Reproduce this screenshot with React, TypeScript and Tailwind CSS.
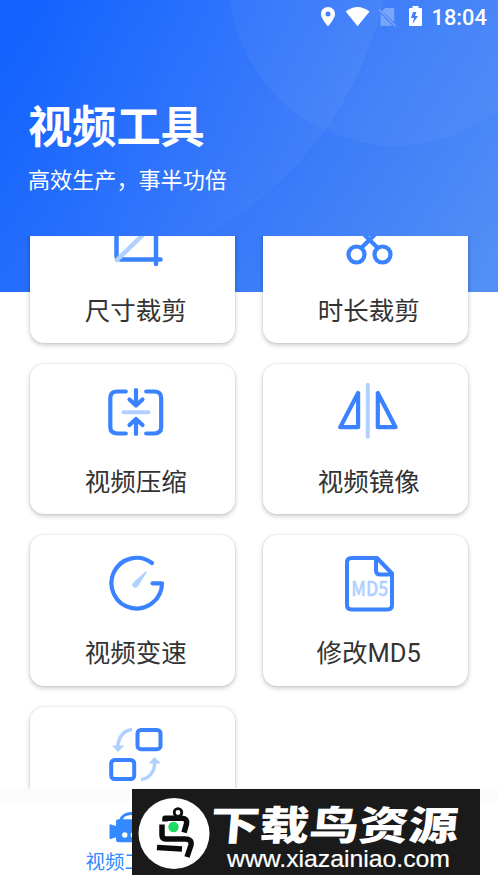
import type { ReactNode } from 'react'

const BLUE = '#3a82ff'
const PALE = '#b0d0ff'

function CropIcon() {
  return (
    <svg width="64" height="64" viewBox="0 0 64 64" fill="none" strokeWidth="4.500" strokeLinecap="round">
      <path d="M7 14h44q4 0 4 4v37M15.500 6v40.500q0 4 4 4h40" stroke={BLUE} />
      <path d="M16 51L51 17" stroke={PALE} />
    </svg>
  )
}

function ScissorsIcon() {
  return (
    <svg width="64" height="64" viewBox="0.500 0 64 64" fill="none" strokeWidth="4.200" stroke={BLUE}>
      <circle cx="23" cy="45.500" r="8" />
      <circle cx="49" cy="45.500" r="8" />
      <path d="M28 38.800L54 13M44 38.800L18 13" strokeLinecap="round" />
    </svg>
  )
}

function CompressIcon() {
  return (
    <svg width="64" height="64" viewBox="-2 0 64 64" fill="none" stroke={BLUE} strokeWidth="4.2" strokeLinecap="round" strokeLinejoin="round">
      <path d="M22.800 11.500H14.300q-7 0-7 6.500v29q0 6.500 7 6.500h8.500M43.200 11.500H51.200q7 0 7 6.500v29q0 6.500-7 6.500h-8" />
      <path d="M33 10v14.500M26.500 19.500l6.500 6l6.500-6M33 54V39.500M26.500 45l6.500-6l6.500 6" />
      <path d="M20.500 32.200H45.500" stroke={PALE} strokeWidth="4" />
    </svg>
  )
}

function MirrorIcon() {
  return (
    <svg width="64" height="64" viewBox="-.800 0 64 64" fill="none" stroke={BLUE} strokeWidth="4.200" strokeLinejoin="round" className="overflow-visible">
      <path d="M23.300 13v34.200H5.400zM43 13v34.200h17.800z" />
      <path d="M33 4.800v52" stroke={PALE} strokeWidth="4" strokeLinecap="round" />
    </svg>
  )
}

function SpeedIcon() {
  return (
    <svg width="64" height="64" viewBox="-1.500 0 64 64" fill="none" stroke={BLUE} strokeWidth="4.2" strokeLinecap="round" strokeLinejoin="round">
      <path d="M49.500 12A25.300 25.300 0 1 0 59.500 32.300H50" />
      <path d="M43.400 20.700L31.700 31C28.200 34.500 31.700 38.300 35 35.300C35.900 34.200 36.400 33.200 37 32.200L43.900 21.300z" fill={PALE} stroke={PALE} strokeWidth="0.800" />
    </svg>
  )
}

function Md5Icon() {
  return (
    <svg width="64" height="64" viewBox="-1 0 64 64" fill="none" stroke={BLUE} strokeWidth="4" strokeLinejoin="round">
      <path d="M42 7H16.500q-4.500 0-4.500 4.500v42.500q0 4.500 4.500 4.500h36q4.500 0 4.500-4.500V22.500z" />
      <path d="M41 7.500v12q0 4 4 4h12" />
      <text x="16.300" y="44.600" textLength="37" lengthAdjust="spacingAndGlyphs" fontSize="20" fontWeight="500" fill={PALE} stroke={PALE} strokeWidth="0.400" fontFamily="'Noto Sans CJK SC', sans-serif">
        MD5
      </text>
    </svg>
  )
}

function ConvertIcon() {
  return (
    <svg width="64" height="64" viewBox="-1.500 0 64 64" fill="none" strokeWidth="4">
      <rect x="35" y="7" width="23" height="19.200" rx="3.500" stroke={BLUE} />
      <rect x="8.700" y="37" width="23" height="19" rx="3.500" stroke={BLUE} />
      <path d="M29.500 6.500C21.500 7.500 16.500 13.500 15.200 23M38.500 56.500C46.500 56 52 48.500 52.200 40" stroke={PALE} strokeWidth="3.400" />
      <path d="M9.500 22.500h12.300l-6.300 6.500zM46 40.500h12.300l-6.300-6.500z" fill={PALE} />
    </svg>
  )
}

function CameraIcon() {
  return (
    <svg width="32" height="32" viewBox="0 0 32 32" fill="#3389ff" className="overflow-visible">
      <path d="M11.500 9C14-1 30-1 33 9" fill="none" stroke="#3389ff" strokeWidth="3" />
      <path d="M.5 13.200c0-.8.500-1 1.200-.8L7 14V9.500q0-2.300 2.300-2.300H31q2 0 2 2V28q0 2.300-2.300 2.300H9.300Q7 30.300 7 28V25.300L1.700 27C1 27.200.5 27 .5 26.300z" />
      <circle cx="15.800" cy="23" r="2.700" fill="#fff" />
      <circle cx="24.300" cy="23" r="2.700" fill="#fff" />
    </svg>
  )
}

function HeaderBackdrop() {
  return (
    <svg className="absolute inset-x-0 top-0 h-[292px] w-full" viewBox="0 0 498 292">
      <defs>
        <linearGradient id="sky" gradientUnits="userSpaceOnUse" x1="10" y1="40" x2="450" y2="330">
          <stop offset="0" stopColor="#1463ff" />
          <stop offset="0.500" stopColor="#3376fa" />
          <stop offset="1" stopColor="#528ff5" />
        </linearGradient>
        <linearGradient id="bubble" x1="0" y1="0.500" x2="1" y2="0.500">
          <stop offset="0.500" stopColor="#fff" stopOpacity="0" />
          <stop offset="1" stopColor="#fff" stopOpacity="0.050" />
        </linearGradient>
      </defs>
      <rect width="498" height="292" fill="url(#sky)" />
      <circle cx="33" cy="-79" r="359" fill="url(#bubble)" />
      <circle cx="395" cy="-20" r="166" fill="#fff" fillOpacity="0.040" />
    </svg>
  )
}

function StatusBar() {
  return (
    <div className="flex h-[34px] items-center justify-end pr-[11.5px]">
      <svg width="104" height="34" viewBox="318 0 104 34" fill="#fff">
        <path fillRule="evenodd" d="M328 7c-4 0-7 3-7 7 0 5 7 12.300 7 12.300s7-7.300 7-12.300c0-4-3-7-7-7zm0 4.500a2.500 2.500 0 1 1 0 5 2.500 2.500 0 0 1 0-5z" />
        <path d="M345.700 11.500Q357.500 2.500 369.500 11.500L357.600 26.300z" />
        <path d="M385 8h8.500q.8 0 .8.800V22.500L382 11zM380.500 13.500L392.500 25.800H381.500q-1 0-1-1z" opacity=".3" />
        <path d="M379 9.500L395.500 26.200" stroke="#fff" strokeWidth="1.600" opacity=".3" />
        <path fillRule="evenodd" d="M412.500 6h6v2h2.500q1 0 1 1v16q0 1-1 1h-11q-1 0-1-1V9q0-1 1-1h2.500zM413 12l-2 6h3l-1.500 6l5.500-8h-3l1.500-4z" />
      </svg>
      <time className="ml-[9.5px] w-[55px] pt-[2px] text-right text-[21.8px] leading-[32px] font-medium">18:04</time>
    </div>
  )
}

function ToolCard({ icon, label }: { icon: ReactNode; label: string }) {
  return (
    <div className="flex h-[150.500px] flex-col items-center rounded-[14px] bg-white pt-[16px] shadow-[0_2px_5px_rgba(0,0,0,0.22),0_0_2px_rgba(0,0,0,0.12)]">
      {icon}
      <span className="mt-[19px] pl-[6.5px] text-[25.5px] leading-[38px] whitespace-nowrap text-[#333]">{label}</span>
    </div>
  )
}

const tools = [
  { label: '尺寸裁剪', icon: <CropIcon /> },
  { label: '时长裁剪', icon: <ScissorsIcon /> },
  { label: '视频压缩', icon: <CompressIcon /> },
  { label: '视频镜像', icon: <MirrorIcon /> },
  { label: '视频变速', icon: <SpeedIcon /> },
  { label: '修改MD5', icon: <Md5Icon /> },
  { label: '格式转换', icon: <ConvertIcon /> },
]

function SiteBanner() {
  return (
    <div className="absolute bottom-0 left-[132px] flex h-[86px] w-[348px] bg-[#1a1a1a]">
      <svg width="348" height="86" viewBox="132 789 348 86">
        <circle cx="174" cy="833.500" r="35.500" fill="#fff" />
        <g fill="none" stroke="#0c0c0c" strokeWidth="5.500" strokeLinejoin="round">
          <circle cx="178" cy="812.500" r="3.800" strokeWidth="2.800" />
          <path d="M165 821.500V818.200H182Q187.500 818.200 186.500 824L184 832.500" />
          <path d="M162 824.500V835Q162 839 166 839H185Q192 839 191 845L187 857" />
          <path d="M157 847.500L182 849" />
        </g>
        <circle cx="173.500" cy="827" r="5.200" fill="#1ddc63" />
        <g fill="#fff">
          <text transform="translate(209 840) skewX(-5)" fontSize="40" fontWeight="900" textLength="248" lengthAdjust="spacingAndGlyphs" fontFamily="'Noto Sans CJK SC', sans-serif">
            下载鸟资源
          </text>
          <text x="227" y="867" fontSize="24" stroke="#fff" strokeWidth=".2" textLength="223" lengthAdjust="spacingAndGlyphs" fontFamily="'Liberation Sans', sans-serif">
            www.xiazainiao.com
          </text>
        </g>
      </svg>
    </div>
  )
}

export default function App() {
  return (
    <div className="h-[885px] w-[498px] overflow-hidden bg-white font-[Roboto,'Noto_Sans_CJK_SC',sans-serif]">
      <div className="relative flex h-[875px] flex-col">
        <HeaderBackdrop />
        <header className="relative h-[236px] text-white">
          <StatusBar />
          <div className="px-7 pt-[62px]">
            <h1 className="text-[44.2px] leading-[64px] font-bold">视频工具</h1>
            <p className="mt-[4px] text-[22.1px] leading-[32px]">高效生产，事半功倍</p>
          </div>
        </header>

        <main className="relative h-[552px] overflow-hidden">
          <div className="-mt-[43.500px] grid grid-cols-2 gap-x-[28px] gap-y-[20.900px] pr-[30px] pl-[30px]">
            {tools.map((tool) => (
              <ToolCard key={tool.label} icon={tool.icon} label={tool.label} />
            ))}
          </div>
        </main>

        <nav className="relative flex h-[87px] bg-white">
          <div className="absolute inset-x-0 top-0 h-[14px] bg-linear-to-b from-[#fbfbfb] to-[#fdfdfd]" />
          <button className="relative flex w-1/2 flex-col items-center pt-[24px] text-[#3389ff]">
            <CameraIcon />
            <span className="mt-[5px] text-[19.500px] leading-[28px]">视频工具</span>
          </button>
        </nav>
        <SiteBanner />
      </div>
    </div>
  )
}
